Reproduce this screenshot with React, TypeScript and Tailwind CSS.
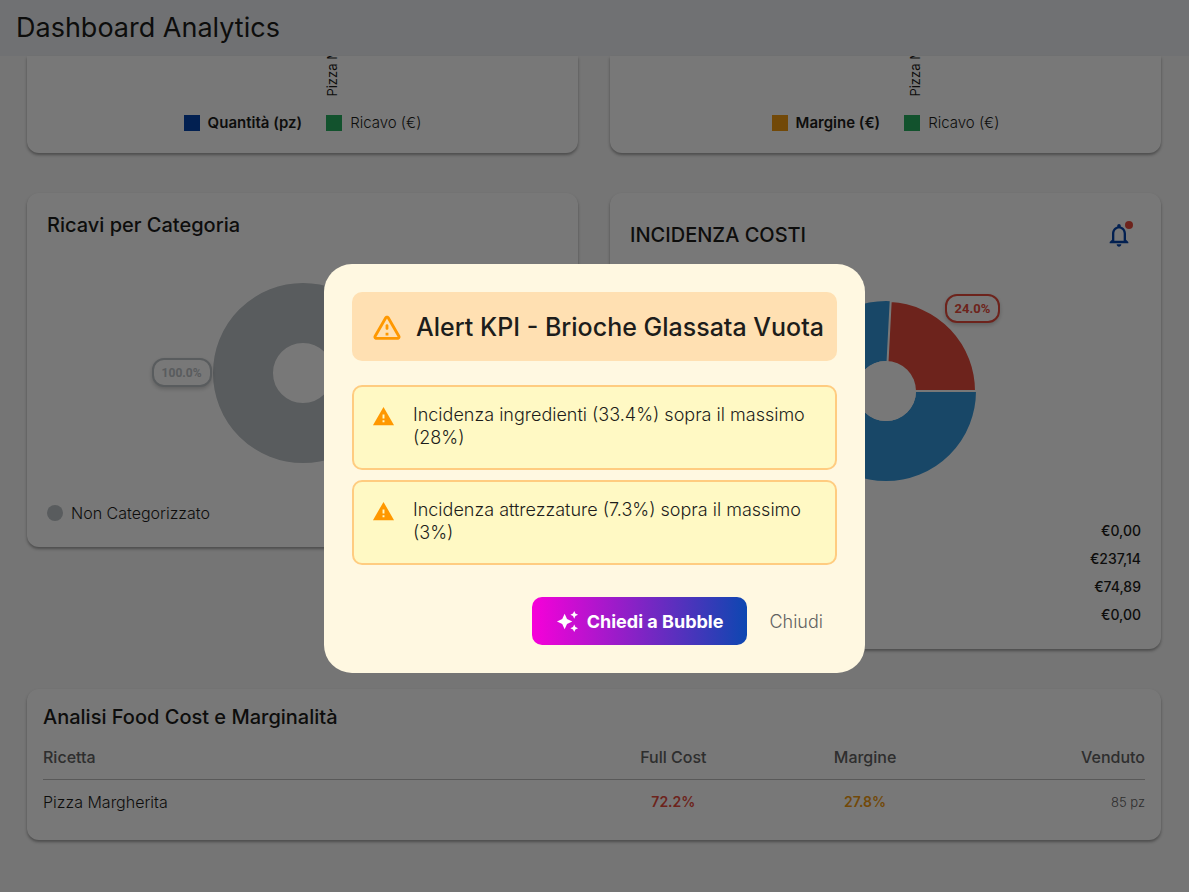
import type { ReactNode } from 'react';
import { MdAutoAwesome, MdNotificationsNone, MdWarning } from 'react-icons/md';

interface LegendItem {
  label: string;
  swatch: string;
  bold?: boolean;
}

const CARD = 'rounded-xl bg-white shadow-[0_2px_3px_rgba(0,0,0,0.35)]';

const costs = ['€0,00', '€237,14', '€74,89', '€0,00'];

const recipes = [{ name: 'Pizza Margherita', fullCost: '72.2%', margin: '27.8%', sold: '85 pz' }];

const alerts = [
  'Incidenza ingredienti (33.4%) sopra il massimo (28%)',
  'Incidenza attrezzature (7.3%) sopra il massimo (3%)',
];

function BarChartCard({ items }: { items: LegendItem[] }) {
  return (
    <section className={`${CARD} rounded-t-none px-5 pb-5`}>
      <div className="flex h-[41px] items-end justify-center overflow-hidden pl-[59px]">
        <span className="rotate-180 text-[13px] leading-4 whitespace-nowrap [writing-mode:vertical-rl]">
          Pizza Margherita
        </span>
      </div>
      <div className="mt-4 flex items-center justify-center gap-6">
        {items.map((item) => (
          <div key={item.label} className="flex items-center gap-2">
            <span className={`size-4 ${item.swatch}`} />
            <span className={`text-[15px] leading-5 ${item.bold ? 'font-semibold' : 'font-light'}`}>{item.label}</span>
          </div>
        ))}
      </div>
    </section>
  );
}

function Badge({ className, children }: { className: string; children: ReactNode }) {
  return (
    <span
      className={`absolute flex h-[29px] items-center rounded-xl border-2 bg-white px-2 font-[Roboto,sans-serif] font-bold shadow-[0_2px_4px_rgba(0,0,0,0.2)] ${className}`}
    >
      {children}
    </span>
  );
}

function WarningRounded() {
  return (
    <svg viewBox="0 0 24 24" className="size-[34px] shrink-0 fill-[#ff9800]" aria-hidden="true">
      <path d="M12 5.99 19.53 19H4.47L12 5.99M2.74 18c-.77 1.33.19 3 1.73 3h15.06c1.54 0 2.5-1.67 1.73-3L13.73 4.99c-.77-1.33-2.69-1.33-3.46 0L2.74 18zM11 11v2c0 .55.45 1 1 1s1-.45 1-1v-2c0-.55-.45-1-1-1s-1 .45-1 1zm0 5h2v2h-2z" />
    </svg>
  );
}

function AlertDialog() {
  return (
    <div className="fixed inset-0 flex items-center justify-center bg-black/53 pt-[45px]">
      <div role="dialog" aria-labelledby="alert-title" className="w-full max-w-[541px] rounded-[28px] bg-[#fff8e1] p-7">
        <div className="flex h-[69px] items-center gap-3 rounded-[10px] bg-[#ffe0b2] px-[18px]">
          <WarningRounded />
          <h2 id="alert-title" className="text-[25px] leading-8 font-medium whitespace-nowrap text-[#1d1d1b]">
            Alert KPI - Brioche Glassata Vuota
          </h2>
        </div>

        <ul className="mt-6 flex flex-col gap-[10px]">
          {alerts.map((alert) => (
            <li
              key={alert}
              className="flex gap-[18px] rounded-[10px] border-2 border-[#ffcc80] bg-[#fff9c4] px-[18px] pt-4 pb-[19px] text-[#1d1d1b]"
            >
              <MdWarning className="mt-[2px] size-[23px] shrink-0 text-[#ff9800]" />
              <p className="text-[18px] leading-[23px] font-light">{alert}</p>
            </li>
          ))}
        </ul>

        <div className="mt-8 flex items-center justify-end">
          <button className="flex h-12 items-center gap-2 rounded-[10px] bg-linear-to-r/srgb from-[#f700d9] to-[#0d47b1] px-6 text-[18px] font-bold whitespace-nowrap text-white">
            <MdAutoAwesome className="size-[23px]" />
            Chiedi a Bubble
          </button>
          <button className="ml-2 px-[14px] text-[18px] font-light text-[#626262]">Chiudi</button>
        </div>
      </div>
    </div>
  );
}

export default function App() {
  return (
    <div className="h-screen overflow-hidden bg-[#f8f8f8] font-[Inter,sans-serif] text-[#1d1d1b]">
      <header className="flex h-14 items-center bg-[#eff1f4] px-4">
        <h1 className="text-[27px] leading-8">Dashboard Analytics</h1>
      </header>

      <main className="flex flex-col gap-10 pr-7 pl-[27px]">
        <div className="grid grid-cols-2 gap-8">
          <BarChartCard
            items={[
              { label: 'Quantità (pz)', swatch: 'bg-[#0645ad]', bold: true },
              { label: 'Ricavo (€)', swatch: 'bg-[#27ae60]' },
            ]}
          />
          <BarChartCard
            items={[
              { label: 'Margine (€)', swatch: 'bg-[#f39c12]', bold: true },
              { label: 'Ricavo (€)', swatch: 'bg-[#27ae60]' },
            ]}
          />
        </div>

        <div className="grid grid-cols-2 items-start gap-8">
          <section className={`${CARD} px-5 pt-5 pb-6`}>
            <h2 className="text-xl leading-6 font-medium">Ricavi per Categoria</h2>
            <div className="relative mx-auto mt-[46px] size-[180px]">
              <svg viewBox="0 0 180 180" aria-hidden="true">
                <circle cx="90" cy="90" r="60" fill="none" stroke="#bdc3c7" strokeWidth="60" />
              </svg>
              <Badge className="top-[75px] right-[181px] border-[#bdc3c7] text-xs text-[#bdc3c7]">100.0%</Badge>
            </div>
            <div className="mt-10 flex items-center gap-2">
              <span className="size-4 rounded-full bg-[#bdc3c7]" />
              <span className="text-base leading-5 font-light">Non Categorizzato</span>
            </div>
          </section>

          <section className={`${CARD} px-5 pt-5 pb-5`}>
            <div className="flex items-center justify-between">
              <h2 className="text-xl leading-6 font-medium">INCIDENZA COSTI</h2>
              <button aria-label="Notifiche" className="relative p-2 text-[#0645ad]">
                <MdNotificationsNone className="size-7" />
                <span className="absolute top-2 right-2 size-2 rounded-full bg-[#e74c3c]" />
              </button>
            </div>
            <div className="relative mx-auto mt-11 size-[180px]">
              <svg viewBox="0 0 180 180" aria-hidden="true">
                <circle cx="90" cy="90" r="60" fill="none" stroke="#3498db" strokeWidth="60" />
                <path d="M90 90 L94.7 0.12 A90 90 0 0 1 180 90 Z" fill="#e74c3c" stroke="#fff" strokeWidth="2" />
                <circle cx="90" cy="90" r="30" fill="#fff" />
              </svg>
              <Badge className="-top-[7px] left-[149px] border-[#e74c3c] text-[13px] text-[#e74c3c]">24.0%</Badge>
            </div>
            <ul className="mt-9 text-right text-sm leading-7 font-medium">
              {costs.map((cost, i) => (
                <li key={i}>{cost}</li>
              ))}
            </ul>
          </section>
        </div>

        <section className={`${CARD} px-4 pt-4 pb-[26px]`}>
          <h2 className="text-xl leading-6 font-medium">Analisi Food Cost e Marginalità</h2>
          <table className="mt-4 w-full table-fixed text-base leading-6">
            <thead>
              <tr className="border-b border-[#bdbdbd] text-[#626262]">
                <th className="w-[48.5%] pb-[10px] text-left font-medium">Ricetta</th>
                <th className="w-[17.4%] pb-[10px] font-medium">Full Cost</th>
                <th className="w-[17.4%] pb-[10px] font-medium">Margine</th>
                <th className="pb-[10px] text-right font-medium">Venduto</th>
              </tr>
            </thead>
            <tbody>
              {recipes.map((recipe) => (
                <tr key={recipe.name}>
                  <td className="pt-[10px] font-light">{recipe.name}</td>
                  <td className="pt-[10px] text-center text-sm leading-6 font-semibold text-[#e74c3c]">
                    {recipe.fullCost}
                  </td>
                  <td className="pt-[10px] text-center text-sm leading-6 font-semibold text-[#f39c12]">
                    {recipe.margin}
                  </td>
                  <td className="pt-[10px] text-right text-[13px] leading-6 font-light text-[#626262]">{recipe.sold}</td>
                </tr>
              ))}
            </tbody>
          </table>
        </section>
      </main>

      <AlertDialog />
    </div>
  );
}
